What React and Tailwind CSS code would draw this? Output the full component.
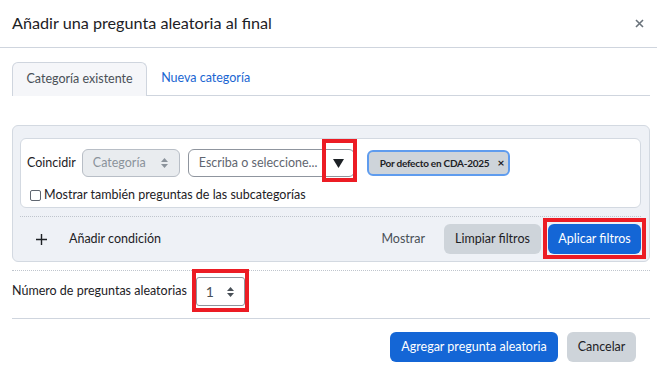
import React from 'react';

const SelectArrows = ({ color = '#495057' }) => (
    <svg width="7" height="10" viewBox="0 0 7 10" fill={color}>
        <path d="M3.5 0 L7 4 H0 Z M3.5 10 L0 6 H7 Z" />
    </svg>
);

const RedBox = ({ className }) => (
    <div className={`absolute border-4 border-[#ec1c24] pointer-events-none ${className}`} />
);

const App = () => {
    return (
        <div className="w-[669px] h-[370px] bg-white overflow-hidden font-['Lato',sans-serif] text-[#1d2125] text-[12.5px]">
            {/* Cabecera */}
            <div className="w-[657px] h-[48px] flex items-center justify-between pl-3 pr-[13px] border-b border-[#cfd5de]">
                <h5 className="text-[16.2px] leading-none">Añadir una pregunta aleatoria al final</h5>
                <svg width="9" height="9" viewBox="0 0 9 9" stroke="#6a737b" strokeWidth="1.6">
                    <path d="M1 1 L8 8 M8 1 L1 8" />
                </svg>
            </div>

            <div className="pl-3 pr-[19px]">
                {/* Pestañas */}
                <div className="mt-[14px] flex border-b border-[#cfd5de] h-[34px]">
                    <div className="h-[34px] px-[13.5px] flex items-center border border-[#cfd5de] border-b-0 rounded-t-md bg-[#f5f6f9] text-[#495057] relative">
                        Categoría existente
                    </div>
                    <div className="h-[33px] px-[14px] flex items-center text-[#1a66d2]">Nueva categoría</div>
                </div>

                {/* Panel de filtros */}
                <div className="mt-[29px] border border-[#d3d9e1] rounded-md bg-[#eef1f6] pl-[7px] pr-2 pt-[12px] pb-[7px]">
                    <div className="bg-white border border-[#d3d9e1] rounded-md h-[70px] pl-[6px] pt-[10px]">
                        <div className="flex items-center h-[28px]">
                            <span className="mr-[6px]">Coincidir</span>
                            <div className="w-[98px] h-[28px] rounded-md border border-[#b8bec6] bg-[#e9ecef] flex items-center justify-between pl-[10px] pr-[11px] text-[#8b939b]">
                                <span>Categoría</span>
                                <SelectArrows color="#8b939b" />
                            </div>
                            <div className="relative ml-[8px] w-[167px] h-[28px] rounded-md border border-[#8f959e] flex items-center justify-between pl-[10px] pr-[10px]">
                                <span className="text-[#5f6670]">Escriba o seleccione...</span>
                                <svg width="11" height="9" viewBox="0 0 11 9" fill="#1d2125">
                                    <path d="M0 0 H11 L5.5 9 Z" />
                                </svg>
                                <RedBox className="left-[133px] -right-[3px] -top-[11px] -bottom-[6px]" />
                            </div>
                            <div className="ml-[12px] h-[26px] pl-[11px] pr-[4px] rounded-md border-2 border-[#5f9cee] bg-[#ced4da] flex items-center gap-[8px] text-[10px] font-bold tracking-[-0.25px]">
                                <span>Por defecto en CDA-2025</span>
                                <span className="text-[12px] font-bold">×</span>
                            </div>
                        </div>
                        <label className="flex items-center mt-[9px] ml-[3px]">
                            <span className="w-[11px] h-[11px] border border-[#5f6670] rounded-[2px] bg-white" />
                            <span className="ml-[3px]">Mostrar también preguntas de las subcategorías</span>
                        </label>
                    </div>

                    <div className="mt-2 border-t border-dotted border-[#bfc5cd]" />

                    <div className="mt-[7px] h-[30px] flex items-center justify-between">
                        <div className="flex items-center">
                            <svg className="ml-[16px]" width="11" height="11" viewBox="0 0 11 11" stroke="#1d2125" strokeWidth="1.4">
                                <path d="M5.5 0 V11 M0 5.5 H11" />
                            </svg>
                            <span className="ml-[22px]">Añadir condición</span>
                        </div>
                        <div className="flex items-center">
                            <span className="text-[#495057] mr-[19px]">Mostrar</span>
                            <button className="w-[97px] h-[30px] rounded-md bg-[#ced4da] text-[#1d2125]">Limpiar filtros</button>
                            <div className="relative ml-[7px]">
                                <button className="w-[93px] h-[30px] rounded-md bg-[#1466d6] text-white">Aplicar filtros</button>
                                <RedBox className="-left-[5px] -right-[5px] -top-[6px] -bottom-[5px]" />
                            </div>
                        </div>
                    </div>
                </div>

                <div className="mt-2 border-t border-dotted border-[#bfc5cd]" />

                {/* Número de preguntas */}
                <div className="mt-[6px] flex items-center h-[29px]">
                    <span>Número de preguntas aleatorias</span>
                    <div className="relative ml-[9px] w-[49px] h-[29px] border border-[#8f959e] rounded-[3px] flex items-center justify-between pl-[9px] pr-[10px]">
                        <span className="text-[#495057] text-[14px]">1</span>
                        <SelectArrows />
                        <RedBox className="-left-[5px] -right-[5px] -top-[9px] -bottom-[7px]" />
                    </div>
                </div>

                <div className="mt-[12px] border-t border-[#cfd5de]" />

                {/* Pie */}
                <div className="mt-[13px] flex justify-end gap-[9px] pr-[14px]">
                    <button className="w-[168px] h-[30px] rounded-md bg-[#1466d6] text-white">Agregar pregunta aleatoria</button>
                    <button className="w-[69px] h-[30px] rounded-md bg-[#ced4da] text-[#1d2125]">Cancelar</button>
                </div>
            </div>
        </div>
    );
};

export default App;
